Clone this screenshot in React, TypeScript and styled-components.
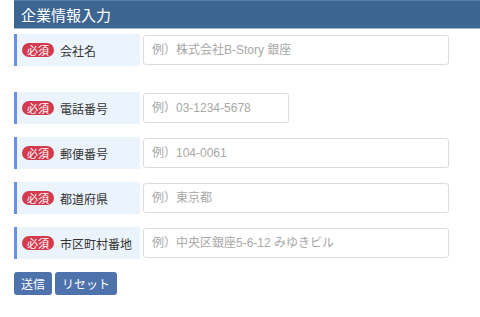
import React from 'react';
import styled, { createGlobalStyle } from 'styled-components';

const GlobalStyle = createGlobalStyle`
  body {
    margin: 0;
    background: #fff;
    font-family: "Liberation Sans", "Noto Sans CJK JP", sans-serif;
  }
`;

const Page = styled.div`
  padding-left: 14px;
`;

const Header = styled.h1`
  margin: 0;
  height: 29px;
  box-sizing: border-box;
  padding-left: 7px;
  display: flex;
  align-items: center;
  background: #3c6591;
  border-top: 1px solid #5a80a8;
  border-bottom: 1px solid #9db6d2;
  color: #fff;
  font-size: 15px;
  font-weight: normal;
`;

const Form = styled.form`
  display: flex;
  flex-direction: column;
  padding-top: 5px;
`;

const Row = styled.div<{ $gap: number }>`
  display: flex;
  align-items: stretch;
  height: 32px;
  margin-bottom: ${(p) => p.$gap}px;
`;

const Label = styled.label`
  width: 126px;
  box-sizing: border-box;
  flex-shrink: 0;
  display: flex;
  align-items: center;
  gap: 6px;
  padding-left: 5px;
  background: #ebf3fc;
  border-left: 3px solid #6b8fe6;
  font-size: 12px;
  color: #333;
`;

const Badge = styled.span`
  display: inline-flex;
  align-items: center;
  justify-content: center;
  width: 32px;
  height: 14px;
  border-radius: 7px;
  background: #d23a4d;
  color: #fff;
  font-size: 11px;
`;

const Input = styled.input<{ $w: number }>`
  margin: 1px 0 0 3px;
  width: ${(p) => p.$w}px;
  height: 30px;
  box-sizing: border-box;
  padding: 0 8px;
  border: 1px solid #dcdcdc;
  border-radius: 3px;
  font-family: inherit;
  font-size: 12px;
  color: #333;
  outline: none;

  &::placeholder {
    color: #a8a8a8;
  }
`;

const Buttons = styled.div`
  display: flex;
  gap: 3px;
`;

const Button = styled.button`
  height: 23px;
  padding: 0 7px;
  border: none;
  border-radius: 3px;
  background: #4e72ac;
  color: #fff;
  font-family: inherit;
  font-size: 12px;
`;

const fields = [
  { label: '会社名', placeholder: '例）株式会社B-Story 銀座', w: 306, gap: 26 },
  { label: '電話番号', placeholder: '例）03-1234-5678', w: 146, gap: 13 },
  { label: '郵便番号', placeholder: '例）104-0061', w: 306, gap: 13 },
  { label: '都道府県', placeholder: '例）東京都', w: 306, gap: 13 },
  { label: '市区町村番地', placeholder: '例）中央区銀座5-6-12 みゆきビル', w: 306, gap: 13 },
];

export default function App() {
  return (
    <Page>
      <GlobalStyle />
      <Header>企業情報入力</Header>
      <Form onSubmit={(e) => e.preventDefault()}>
        {fields.map((f) => (
          <Row key={f.label} $gap={f.gap}>
            <Label>
              <Badge>必須</Badge>
              {f.label}
            </Label>
            <Input $w={f.w} placeholder={f.placeholder} />
          </Row>
        ))}
        <Buttons>
          <Button type="submit">送信</Button>
          <Button type="reset">リセット</Button>
        </Buttons>
      </Form>
    </Page>
  );
}
